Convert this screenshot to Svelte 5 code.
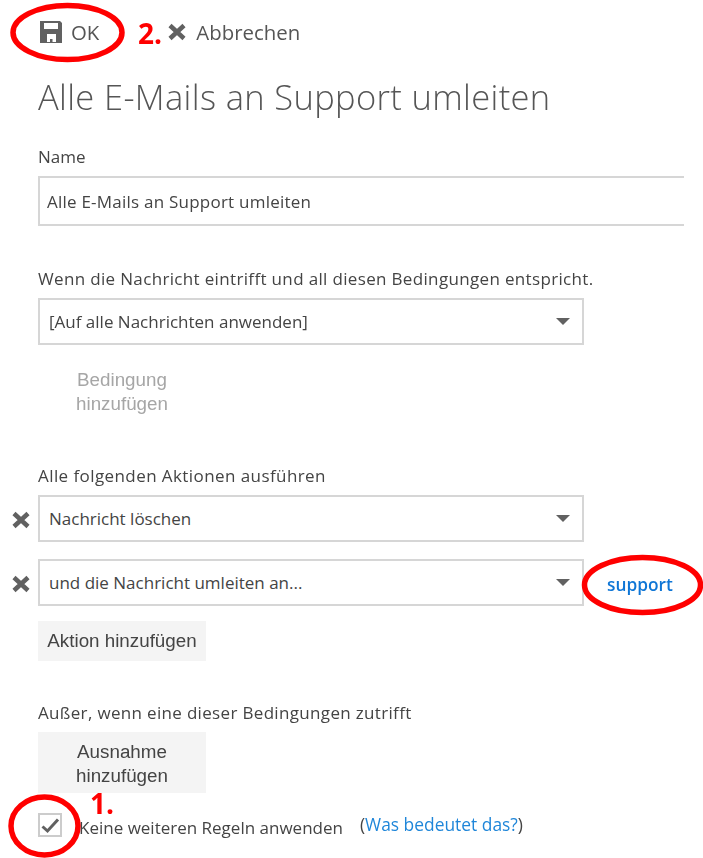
<script>
  const trigger = "M0 0 L14 0 L7 7 Z";
  const cross = "M3 3.5 L17 16.500 M17 3.5 L3 16.500";
</script>

<div class="page">
  <div class="toolbar">
    <span class="tool ok">
      <svg class="save" viewBox="0 0 22 22" width="22" height="22" aria-hidden="true">
        <path fill="#616161" fill-rule="evenodd" d="M0 0H20L22 2V22H0ZM4 2V8H18V2ZM7 13V21H16V13Z" />
        <rect x="10" y="18" width="2.500" height="3" fill="#616161" />
      </svg>
      OK
    </span>
    <span class="tool cancel">
      <svg class="x" viewBox="0 0 20 20" width="20" height="20" aria-hidden="true"><path d={cross} /></svg>
      Abbrechen
    </span>
  </div>

  <h1>Alle E-Mails an Support umleiten</h1>

  <label class="name-label" for="name">Name</label>
  <div class="name-box" id="name">Alle E-Mails an Support umleiten</div>

  <p class="cond-label">Wenn die Nachricht eintrifft und all diesen Bedingungen entspricht.</p>
  <div class="select">
    <span>[Auf alle Nachrichten anwenden]</span>
    <svg class="caret" viewBox="0 0 14 7" width="14" height="7" aria-hidden="true"><path d={trigger} /></svg>
  </div>
  <div class="btn disabled">Bedingung<br />hinzufügen</div>

  <p class="act-label">Alle folgenden Aktionen ausführen</p>
  <div class="action">
    <svg class="x remove" viewBox="0 0 20 20" width="20" height="20" aria-hidden="true"><path d={cross} /></svg>
    <div class="select">
      <span>Nachricht löschen</span>
      <svg class="caret" viewBox="0 0 14 7" width="14" height="7" aria-hidden="true"><path d={trigger} /></svg>
    </div>
  </div>
  <div class="action second">
    <svg class="x remove" viewBox="0 0 20 20" width="20" height="20" aria-hidden="true"><path d={cross} /></svg>
    <div class="select">
      <span>und die Nachricht umleiten an...</span>
      <svg class="caret" viewBox="0 0 14 7" width="14" height="7" aria-hidden="true"><path d={trigger} /></svg>
    </div>
    <span class="support">support</span>
  </div>
  <div class="btn add">Aktion hinzufügen</div>

  <p class="exc-label">Außer, wenn eine dieser Bedingungen zutrifft</p>
  <div class="btn exc">Ausnahme<br />hinzufügen</div>

  <div class="check-row">
    <span class="check">
      <svg viewBox="0 0 20 20" width="20" height="20" aria-hidden="true"><path d="M2.500 11.500 L7.500 16 L18 4.500" /></svg>
    </span>
    <span class="check-text">Keine weiteren Regeln anwenden</span>
    <span class="help">(<span class="link">Was bedeutet das?</span>)</span>
  </div>

  <svg class="ink" viewBox="0 0 703 858" width="703" height="858" aria-hidden="true">
    <ellipse cx="67.500" cy="32.500" rx="54.500" ry="27" />
    <ellipse cx="642.500" cy="585" rx="58" ry="27.500" />
    <ellipse cx="44.500" cy="826" rx="33.500" ry="29" />
  </svg>
  <span class="num two">2.</span>
  <span class="num one">1.</span>
</div>

<style>
  :global(body) {
    margin: 0;
    background: #fff;
  }
  .page {
    position: relative;
    width: 703px;
    height: 858px;
    overflow: hidden;
    box-sizing: border-box;
    padding: 16px 0 0 38px;
    font-family: "Open Sans", "Noto Sans", sans-serif;
    font-size: 17px;
    color: #444;
    filter: blur(0.35px);
  }
  .toolbar {
    display: flex;
    align-items: center;
    height: 32px;
    font-size: 20.400px;
    color: #555;
  }
  .tool {
    display: flex;
    align-items: center;
  }
  .ok {
    gap: 9px;
    margin-left: 2px;
  }
  .cancel {
    margin-left: 68px;
    gap: 9px;
  }
  .x path {
    stroke: #616161;
    stroke-width: 4.5;
    fill: none;
  }
  h1 {
    margin: 24px 0 0;
    font-size: 34.500px;
    line-height: 50px;
    font-weight: 300;
    letter-spacing: 0.35px;
    color: #555;
  }
  .name-label {
    display: block;
    margin-top: 25px;
    line-height: 20px;
  }
  .name-box {
    box-sizing: border-box;
    width: 646px;
    height: 50px;
    margin-top: 9px;
    padding: 0 0 0 7px;
    border: 2px solid #d6d6d6;
    border-right: 0;
    display: flex;
    align-items: center;
    letter-spacing: 0.23px;
  }
  .cond-label {
    margin: 43px 0 0;
    line-height: 20px;
    letter-spacing: 0.34px;
  }
  .select {
    box-sizing: border-box;
    width: 546px;
    height: 47px;
    border: 2px solid #d6d6d6;
    display: flex;
    align-items: center;
    justify-content: space-between;
    padding: 0 12px 0 9px;
    background: #fff;
  }
  .cond-label + .select {
    margin-top: 9px;
  }
  .caret path {
    fill: #616161;
  }
  .btn {
    box-sizing: border-box;
    font-family: "Liberation Sans", Arial, sans-serif;
    font-size: 18.800px;
    line-height: 24px;
    text-align: center;
    color: #444;
  }
  .disabled {
    width: 168px;
    height: 60px;
    margin-top: 23px;
    color: #a6a6a6;
  }
  .act-label {
    margin: 38px 0 0;
    line-height: 20px;
    letter-spacing: 0.42px;
  }
  .action {
    display: flex;
    align-items: center;
    height: 47px;
    margin-top: 9px;
    position: relative;
  }
  .action.second {
    margin-top: 17px;
  }
  .remove {
    position: absolute;
    left: -27px;
    top: 15px;
  }
  .support {
    margin-left: 23px;
    color: #0f76d6;
    font-weight: 600;
    font-size: 17.300px;
    margin-top: 4px;
  }
  .add {
    width: 168px;
    height: 40px;
    margin-top: 15px;
    background: #f4f4f4;
    display: flex;
    align-items: center;
    justify-content: center;
  }
  .exc-label {
    margin: 42px 0 0;
    line-height: 20px;
    letter-spacing: 0.33px;
  }
  .exc {
    width: 168px;
    height: 61px;
    margin-top: 9px;
    padding-top: 8px;
    background: #f4f4f4;
  }
  .check-row {
    display: flex;
    align-items: center;
    height: 24px;
    margin-top: 20px;
    position: relative;
  }
  .check {
    box-sizing: border-box;
    width: 24px;
    height: 24px;
    border: 2px solid #ccc;
    flex: none;
    display: flex;
    align-items: center;
    justify-content: center;
  }
  .check path {
    stroke: #616161;
    stroke-width: 3;
    fill: none;
  }
  .check-text {
    margin-left: 17px;
    margin-top: 4px;
  }
  .help {
    margin-left: 17px;
    margin-top: -3px;
    font-size: 17.400px;
  }
  .link {
    color: #1f86d9;
  }
  .ink {
    position: absolute;
    left: 0;
    top: 0;
    pointer-events: none;
  }
  .ink ellipse {
    fill: none;
    stroke: #f00;
    stroke-width: 5.5;
  }
  .num {
    position: absolute;
    color: #f00;
    font-family: "Open Sans", sans-serif;
    font-weight: 700;
    font-size: 28px;
    line-height: 24px;
  }
  .two {
    left: 138px;
    top: 21px;
  }
  .one {
    left: 90px;
    top: 791px;
  }
</style>
